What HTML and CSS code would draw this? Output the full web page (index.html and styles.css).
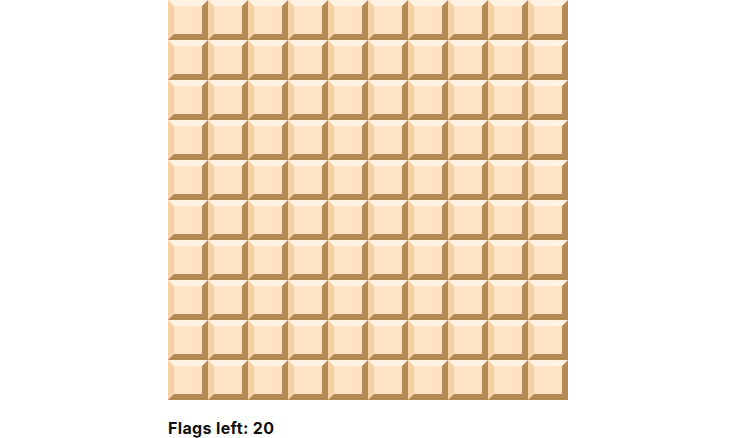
FILE: index.html
```html
<!DOCTYPE html>
<html lang="en">
<head>
    <meta charset="UTF-8">
    <meta name="viewport" content="width=device-width, initial-scale=1.0">
    <title>Minesweeper</title>
    <link rel="stylesheet" href="styles.css">
</head>
<body>
    <div class="game">
        <div class="board" id="board"></div>
        <p class="flags">Flags left: <span id="flagsLeft">20</span></p>
    </div>
    <script src="board.js"></script>
</body>
</html>
```

FILE: styles.css
```css
body {
    margin: 0;
    background-color: #fff;
    font-family: Inter, "Open Sans", sans-serif;
    overflow: hidden;
}

.game {
    width: 400px;
    margin: 0 auto;
}

.board {
    display: grid;
    grid-template-columns: repeat(10, 40px);
    grid-auto-rows: 40px;
}

.tile {
    box-sizing: border-box;
    background-color: #ffe3c4;
    border-style: solid;
    border-width: 6px;
    border-color: #fff1e3 #b58b55 #b58b55 #f5d1a5;
}

.flags {
    margin: 19px 0 0;
    font-size: 16px;
    font-weight: 700;
    line-height: 19px;
    letter-spacing: 0.36px;
    color: #111;
}
```

FILE: board.js
```js
const boardSize = 10;
let board = document.getElementById('board');
let tilesHtml = '';

for (let i = 0; i < boardSize * boardSize; i++) {
    tilesHtml += '<div class="tile"></div>';
}

board.innerHTML = tilesHtml;
```
